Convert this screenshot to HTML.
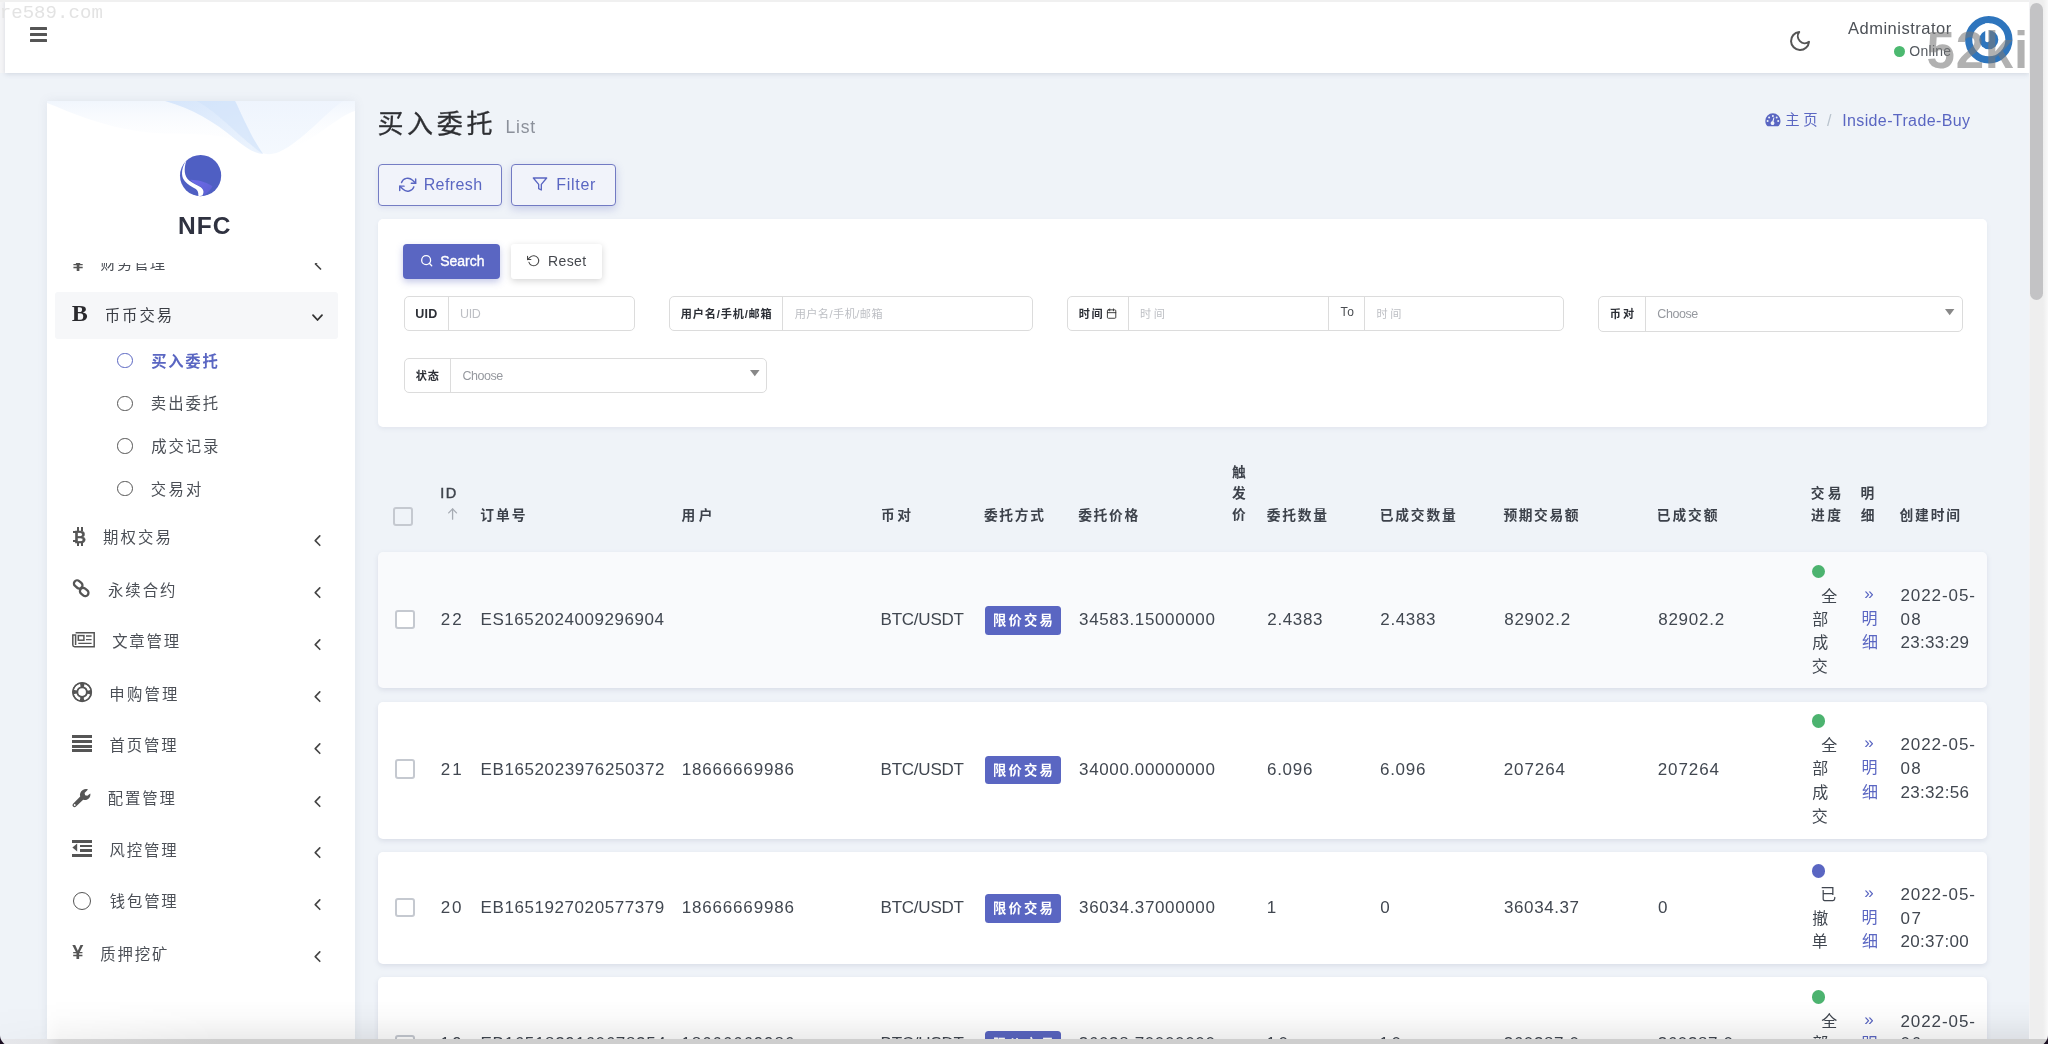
<!DOCTYPE html>
<html lang="zh-CN"><head><meta charset="utf-8"><title>买入委托</title>
<style>
html,body{margin:0;padding:0}
body{width:2048px;height:1044px;overflow:hidden;position:relative;background:#eff3f8;font-family:"Liberation Sans","Noto Sans CJK SC",sans-serif;color:#414750}
.t{position:absolute;white-space:nowrap;display:block}
.b{font-weight:700}
.serif{font-family:"Liberation Serif","Noto Serif CJK SC",serif}
.mono{font-family:"Liberation Mono","Noto Sans CJK SC",monospace}
svg{position:absolute;overflow:visible}
.st{fill:none;stroke-linecap:round;stroke-linejoin:round}
.ig{position:absolute;box-sizing:border-box;border:1px solid #dcdcdc;border-radius:5px}
.dv{position:absolute;width:1px;background:#dcdcdc}
.row{position:absolute;left:378px;width:1609px;background:#fff;border-radius:5px;box-shadow:0 2px 5px rgba(120,130,160,.18)}
.cb{position:absolute;box-sizing:border-box;width:19.5px;height:19.5px;border:2px solid #c5c9d0;border-radius:3px;background:#fff}
.badge{position:absolute;background:#5a66c2;border-radius:3.5px}
.dot{position:absolute;width:13.4px;height:13.4px;border-radius:50%}
</style></head><body><div id="app" style="position:absolute;left:0;top:0;width:2048px;height:1044px;overflow:hidden;opacity:.9999">
<div style="position:absolute;left:0px;top:0px;width:5px;height:73px;background:#f6f6f7"></div><div style="position:absolute;left:4.5px;top:0px;width:2024.5px;height:72.5px;background:#fff;box-shadow:0 1px 5px rgba(90,100,130,.2)"></div><div style="position:absolute;left:0px;top:0px;width:2048px;height:1.5px;background:#f0f0f0"></div><div style="position:absolute;left:29.5px;top:27px;width:17.5px;height:2.6px;background:#555;border-radius:.5px"></div><div style="position:absolute;left:29.5px;top:33px;width:17.5px;height:2.6px;background:#555;border-radius:.5px"></div><div style="position:absolute;left:29.5px;top:39px;width:17.5px;height:2.6px;background:#555;border-radius:.5px"></div><span class="t mono" style="left:-0.33px;top:0.00px;font-size:19px;line-height:26px;color:#e3e3e3;letter-spacing:0.075px;">re589.com</span><svg style="left:1788px;top:29px" width="24" height="24" viewBox="0 0 24 24" ><g class="st" stroke="#555" stroke-width="2"><path d="M21 12.79A9 9 0 1 1 11.21 3 7 7 0 0 0 21 12.79z"/></g></svg><span class="t" style="left:1848.00px;top:16.00px;font-size:16.5px;line-height:24px;color:#4d5157;letter-spacing:0.500px;">Administrator</span><div style="position:absolute;left:1894px;top:45.7px;width:11.4px;height:11.4px;background:#4cb970;border-radius:50%"></div><span class="t" style="left:1909.33px;top:41.00px;font-size:14px;line-height:20px;color:#555a60;letter-spacing:0.270px;">Online</span><svg style="left:1965px;top:16px" width="47.6" height="47.6" viewBox="0 0 48 48" ><circle cx="24" cy="24" r="20.3" fill="#fff" stroke="#2e75bd" stroke-width="7.2"/><circle cx="24" cy="24" r="9.6" fill="#2e75bd"/><path d="M20.4 7.4 L20.4 24.4 A2.05 2.05 0 0 0 24.5 24.4 L24.5 7.4 Z" fill="#fff"/></svg><span class="t " style="left:1926.50px;top:21.00px;font-size:51px;line-height:60px;color:rgba(120,120,120,.58);font-weight:700;letter-spacing:.77px;">52ki</span><div style="position:absolute;left:2029px;top:0px;width:19px;height:1044px;background:linear-gradient(to right,#f4f4f6 0,#eeeeee 1.5px,#eeeeee 14px,#f9f9f9 100%)"></div><div style="position:absolute;left:2029.5px;top:2.5px;width:13.5px;height:297px;background:#c3c3c5;border-radius:7px"></div><div style="position:absolute;left:46.5px;top:101px;width:308px;height:943px;background:#fff;box-shadow:0 0 10px rgba(100,110,140,.10)"></div><svg style="left:46.5px;top:101px" width="308" height="80" viewBox="0 0 308 80" ><defs><linearGradient id="wg1" x1="0" y1="0" x2="1" y2="1"><stop offset="0" stop-color="#d3e4fb" stop-opacity=".9"/><stop offset="1" stop-color="#e6f0fd" stop-opacity=".75"/></linearGradient><linearGradient id="wg2" x1="0" y1="0" x2="0" y2="1"><stop offset="0" stop-color="#f1f6fd"/><stop offset="1" stop-color="#ffffff" stop-opacity="0"/></linearGradient><linearGradient id="wg3" x1="0" y1="0" x2="0" y2="1"><stop offset="0" stop-color="#eef4fd" stop-opacity=".9"/><stop offset="1" stop-color="#f3f8fe" stop-opacity=".9"/></linearGradient></defs><path d="M0 0 H308 V10 C292 14 270 38 240 50 C226 55 214 52 200 44 C170 28 130 36 90 30 C55 25 25 12 0 2 Z" fill="url(#wg2)"/><path d="M186 0 H296 C278 12 256 40 232 51 C222 55 214 53 206 48 C200 30 194 14 186 0 Z" fill="url(#wg3)"/><path d="M118 0 H188 C196 16 204 36 216 53 C206 52 198 46 188 38 C166 20 146 8 118 0 Z" fill="url(#wg1)"/><path d="M150 0 H188 C196 16 204 36 216 53 C192 36 172 12 150 0 Z" fill="#cfe1fa" opacity=".55"/></svg><svg style="left:179.8px;top:154.9px" width="41.2" height="41.2" viewBox="0 0 41.2 41.2" ><defs><linearGradient id="lg1" x1="0" y1="0" x2="1" y2="1"><stop offset="0" stop-color="#6f6bea"/><stop offset="1" stop-color="#5b5fd0"/></linearGradient></defs><circle cx="20.6" cy="20.6" r="20.6" fill="#4f5fc3"/><path d="M10.4 24.7 C14 25 17.5 25.2 20.5 26 C24.5 27 28.5 28.8 32.5 31.2 C31 34.5 28 37.6 23.2 40.6 C25 36.5 23.5 33.2 20 31.2 C16.5 29.4 12.5 27.6 10.4 24.7 Z" fill="url(#lg1)"/><path d="M5.9 5.9 C3.3 9.6 1.9 14.4 2.0 18.7 C2.2 22.2 3.4 24.4 4.9 26.2 C7.6 29.2 11.6 31.8 15.8 34.1 C17.8 35.4 18.6 37.6 18.3 40.7 C19.8 41.1 21.2 41 22.4 40.6 C24.2 37.6 24 34.8 20.8 32.3 C17.5 30 13 28.4 9.1 25.4 C6.6 23.3 5.2 20.6 4.8 17 C4.5 13.2 5 9.4 6.3 5.9 Z" fill="#fff"/></svg><span class="t" style="left:178.00px;top:209.00px;font-size:24.5px;line-height:34px;color:#2f3240;font-weight:700;letter-spacing:1.020px;">NFC</span><div style="position:absolute;left:47px;top:263.2px;width:307px;height:20px;overflow:hidden"><div style="position:absolute;left:-47px;top:-263.2px;width:400px;height:400px"><span class="t " style="left:100.50px;top:252.00px;font-size:15.35px;line-height:24px;color:#4b4f56;letter-spacing:1.1px;">财务管理</span><span class="t " style="left:72.50px;top:250.00px;font-size:20px;line-height:28px;color:#555;font-weight:700;">¥</span><svg style="left:313.5px;top:258.2px" width="8" height="12" viewBox="0 0 8 12" ><polyline class="st" points="6.5 1 1.5 6 6.5 11" stroke="#444" stroke-width="1.7"/></svg></div></div><div style="position:absolute;left:55px;top:291.5px;width:282.5px;height:47px;background:#f6f7f9;border-radius:3px"></div><span class="t serif" style="left:71.67px;top:299.00px;font-size:24px;line-height:28px;color:#2a2a2e;font-weight:700;">B</span><span class="t" style="left:104.67px;top:304.00px;font-size:15.35px;line-height:24px;color:#3a3d44;letter-spacing:2.030px;">币币交易</span><svg style="left:312px;top:313.5px" width="11" height="7.5" viewBox="0 0 11 7.5" ><polyline class="st" points="1 1.2 5.5 6 10 1.2" stroke="#333" stroke-width="1.8"/></svg><div style="position:absolute;left:117.2px;top:352.9px;width:15.4px;height:15.4px;box-sizing:border-box;border:1.9px solid #5a66c2;border-radius:50%"></div><span class="t" style="left:151.20px;top:350.00px;font-size:15.35px;line-height:24px;color:#5a66c2;font-weight:700;letter-spacing:1.740px;">买入委托</span><div style="position:absolute;left:117.2px;top:395.6px;width:15.4px;height:15.4px;box-sizing:border-box;border:1.9px solid #555;border-radius:50%"></div><span class="t" style="left:150.87px;top:392.00px;font-size:15.35px;line-height:24px;color:#4b4f56;letter-spacing:1.940px;">卖出委托</span><div style="position:absolute;left:117.2px;top:438.2px;width:15.4px;height:15.4px;box-sizing:border-box;border:1.9px solid #555;border-radius:50%"></div><span class="t" style="left:151.20px;top:435.00px;font-size:15.35px;line-height:24px;color:#4b4f56;letter-spacing:1.940px;">成交记录</span><div style="position:absolute;left:117.2px;top:480.9px;width:15.4px;height:15.4px;box-sizing:border-box;border:1.9px solid #555;border-radius:50%"></div><span class="t" style="left:150.87px;top:478.00px;font-size:15.35px;line-height:24px;color:#4b4f56;letter-spacing:2.250px;">交易对</span><span class="t" style="left:103.00px;top:526.00px;font-size:15.35px;line-height:24px;color:#4b4f56;letter-spacing:2.120px;">期权交易</span><svg style="left:314.4px;top:534.6px" width="7" height="11.2" viewBox="0 0 7 11.2" ><polyline class="st" points="5.8 0.9 1.2 5.6 5.8 10.3" stroke="#444" stroke-width="1.6"/></svg><span class="t" style="left:108.00px;top:579.00px;font-size:15.35px;line-height:24px;color:#4b4f56;letter-spacing:2.020px;">永续合约</span><svg style="left:314.4px;top:587.4px" width="7" height="11.2" viewBox="0 0 7 11.2" ><polyline class="st" points="5.8 0.9 1.2 5.6 5.8 10.3" stroke="#444" stroke-width="1.6"/></svg><span class="t" style="left:112.20px;top:630.00px;font-size:15.35px;line-height:24px;color:#4b4f56;letter-spacing:1.820px;">文章管理</span><svg style="left:314.4px;top:639.1px" width="7" height="11.2" viewBox="0 0 7 11.2" ><polyline class="st" points="5.8 0.9 1.2 5.6 5.8 10.3" stroke="#444" stroke-width="1.6"/></svg><span class="t" style="left:109.33px;top:683.00px;font-size:15.35px;line-height:24px;color:#4b4f56;letter-spacing:2.220px;">申购管理</span><svg style="left:314.4px;top:691.4px" width="7" height="11.2" viewBox="0 0 7 11.2" ><polyline class="st" points="5.8 0.9 1.2 5.6 5.8 10.3" stroke="#444" stroke-width="1.6"/></svg><span class="t" style="left:109.53px;top:734.00px;font-size:15.35px;line-height:24px;color:#4b4f56;letter-spacing:1.920px;">首页管理</span><svg style="left:314.4px;top:742.9px" width="7" height="11.2" viewBox="0 0 7 11.2" ><polyline class="st" points="5.8 0.9 1.2 5.6 5.8 10.3" stroke="#444" stroke-width="1.6"/></svg><span class="t" style="left:107.67px;top:787.00px;font-size:15.35px;line-height:24px;color:#4b4f56;letter-spacing:1.920px;">配置管理</span><svg style="left:314.4px;top:795.6px" width="7" height="11.2" viewBox="0 0 7 11.2" ><polyline class="st" points="5.8 0.9 1.2 5.6 5.8 10.3" stroke="#444" stroke-width="1.6"/></svg><span class="t" style="left:109.53px;top:839.00px;font-size:15.35px;line-height:24px;color:#4b4f56;letter-spacing:1.920px;">风控管理</span><svg style="left:314.4px;top:847.4px" width="7" height="11.2" viewBox="0 0 7 11.2" ><polyline class="st" points="5.8 0.9 1.2 5.6 5.8 10.3" stroke="#444" stroke-width="1.6"/></svg><span class="t" style="left:109.87px;top:890.00px;font-size:15.35px;line-height:24px;color:#4b4f56;letter-spacing:1.820px;">钱包管理</span><svg style="left:314.4px;top:899.1px" width="7" height="11.2" viewBox="0 0 7 11.2" ><polyline class="st" points="5.8 0.9 1.2 5.6 5.8 10.3" stroke="#444" stroke-width="1.6"/></svg><span class="t" style="left:100.33px;top:943.00px;font-size:15.35px;line-height:24px;color:#4b4f56;letter-spacing:1.920px;">质押挖矿</span><svg style="left:314.4px;top:951.4px" width="7" height="11.2" viewBox="0 0 7 11.2" ><polyline class="st" points="5.8 0.9 1.2 5.6 5.8 10.3" stroke="#444" stroke-width="1.6"/></svg><span class="t" style="left:74.13px;top:527.00px;font-size:16.2px;line-height:20px;color:#555;font-weight:700;-webkit-text-stroke:.4px #555;">B</span><div style="position:absolute;left:72.8px;top:531px;width:3.7px;height:2.2px;background:#555"></div><div style="position:absolute;left:72.8px;top:540.3px;width:3.7px;height:2.2px;background:#555"></div><div style="position:absolute;left:77.4px;top:527.3px;width:1.9px;height:4.1px;background:#555"></div><div style="position:absolute;left:77.4px;top:542.2px;width:1.9px;height:3.6px;background:#555"></div><div style="position:absolute;left:81.3px;top:527.3px;width:1.9px;height:4.1px;background:#555"></div><div style="position:absolute;left:81.3px;top:542.2px;width:1.9px;height:3.6px;background:#555"></div><svg style="left:72.4px;top:578.5px" width="18.4" height="18.4" viewBox="0 0 18.4 18.4" ><g fill="none" stroke="#555" stroke-width="2.3"><rect x="1.6" y="2.2" width="9.2" height="6.4" rx="3.2" transform="rotate(40 6.2 5.4)"/><rect x="7.6" y="9.8" width="9.2" height="6.4" rx="3.2" transform="rotate(40 12.2 13)"/></g></svg><svg style="left:72px;top:632px" width="23" height="15.6" viewBox="0 0 23 15.6" ><g fill="none" stroke="#555" stroke-width="1.5"><path d="M3.6 0.8 H22.2 V14.8 H2.6 A1.9 1.9 0 0 1 0.8 13 V3 H3.6 V13"/><rect x="6.3" y="3.6" width="5.6" height="4.6"/><path d="M14 4 H19.6 M14 7.6 H19.6 M6.3 11.4 H19.6" stroke-width="1.3"/></g></svg><svg style="left:72px;top:682.3px" width="20.2" height="20.2" viewBox="0 0 20.2 20.2" ><circle cx="10.1" cy="10.1" r="7.2" fill="none" stroke="#555" stroke-width="5.4"/><circle cx="10.1" cy="10.1" r="7.2" fill="none" stroke="#fff" stroke-width="2.6" stroke-dasharray="7.3 4" stroke-dashoffset="-2"/><circle cx="10.1" cy="10.1" r="9.3" fill="none" stroke="#555" stroke-width="1.5"/><circle cx="10.1" cy="10.1" r="4.6" fill="none" stroke="#555" stroke-width="1.5"/></svg><div style="position:absolute;left:72px;top:735.4px;width:20.3px;height:2.9px;background:#555"></div><div style="position:absolute;left:72px;top:740.05px;width:20.3px;height:2.9px;background:#555"></div><div style="position:absolute;left:72px;top:744.7px;width:20.3px;height:2.9px;background:#555"></div><div style="position:absolute;left:72px;top:749.35px;width:20.3px;height:2.9px;background:#555"></div><svg style="left:72.4px;top:788.7px" width="18.6" height="18.2" viewBox="0 0 18.6 18.2" ><path d="M18.3 4.6 C18.9 7.4 17.2 10.4 14.2 11 C13.1 11.2 12.1 11.1 11.2 10.7 L4 17.6 C3.2 18.4 1.9 18.4 1.1 17.6 C0.3 16.8 0.3 15.5 1.1 14.7 L8.2 7.6 C7.4 5.2 8.4 2.3 10.8 0.9 C12.5 -0.1 14.4 -0.2 16 0.5 L12.6 3.9 L13.1 6.2 L15.3 6.7 Z" fill="#555"/><circle cx="2.7" cy="16" r="0.9" fill="#fff"/></svg><div style="position:absolute;left:72px;top:840.2px;width:20.3px;height:2.7px;background:#555"></div><div style="position:absolute;left:80.2px;top:844.75px;width:12.1px;height:2.7px;background:#555"></div><div style="position:absolute;left:80.2px;top:849.3px;width:12.1px;height:2.7px;background:#555"></div><div style="position:absolute;left:72px;top:853.85px;width:20.3px;height:2.7px;background:#555"></div><svg style="left:72px;top:843.4px" width="5.6" height="9" viewBox="0 0 5.6 9" ><path d="M5.2 0.4 V8.6 L0.4 4.5 Z" fill="#555"/></svg><div style="position:absolute;left:73px;top:891.5px;width:18px;height:18px;box-sizing:border-box;border:1.9px solid #555;border-radius:50%"></div><span class="t" style="left:72.13px;top:940.00px;font-size:20px;line-height:24px;color:#555;font-weight:700;">¥</span><span class="t" style="left:377.43px;top:106.00px;font-size:26.04px;line-height:36px;color:#2e2f33;letter-spacing:3.650px;-webkit-text-stroke:.3px #2e2f33;">买入委托</span><span class="t" style="left:505.47px;top:115.00px;font-size:17.5px;line-height:24px;color:#8b909a;letter-spacing:0.770px;">List</span><svg style="left:1764.8px;top:112.6px" width="15.8" height="13.6" viewBox="0 0 15.8 13.6" ><path d="M7.9 0.3 A7.6 7.6 0 0 0 0.3 7.9 C0.3 9.6 0.85 11.2 1.8 12.5 C2 12.9 2.4 13.2 2.9 13.2 H12.9 C13.4 13.2 13.8 12.9 14 12.5 C14.95 11.2 15.5 9.6 15.5 7.9 A7.6 7.6 0 0 0 7.9 0.3 Z" fill="#5a66c2"/><g fill="#eff3f8"><circle cx="7.9" cy="2.9" r="1"/><circle cx="4.1" cy="4.4" r="1"/><circle cx="11.7" cy="4.4" r="1"/><circle cx="2.6" cy="8.1" r="1"/><circle cx="13.2" cy="8.1" r="1"/><path d="M8.5 4.4 L9.4 4.6 L8.6 8.6 A1.9 1.9 0 1 1 7.3 8.3 Z"/></g></svg><span class="t" style="left:1785.33px;top:109.00px;font-size:14.32px;line-height:22px;color:#5a66c2;letter-spacing:3.690px;">主页</span><span class="t" style="left:1827.00px;top:110.00px;font-size:16px;line-height:22px;color:#b9c3cd;">/</span><span class="t" style="left:1842.20px;top:110.00px;font-size:16px;line-height:22px;color:#5a66c2;letter-spacing:0.376px;">Inside-Trade-Buy</span><div style="position:absolute;left:378px;top:164.2px;width:124px;height:42.2px;box-sizing:border-box;border:1.5px solid #757dc4;border-radius:4px;background:#f1f3fa;box-shadow:0 2px 5px rgba(88,100,189,.12)"></div><svg style="left:398.6px;top:176px" width="17.4" height="17.4" viewBox="0 0 24 24" ><g class="st" stroke="#5a66c2" stroke-width="2"><polyline points="23 4 23 10 17 10"/><polyline points="1 20 1 14 7 14"/><path d="M3.51 9a9 9 0 0 1 14.85-3.36L23 10M1 14l4.64 4.36A9 9 0 0 0 20.49 15"/></g></svg><span class="t" style="left:423.67px;top:174.00px;font-size:16px;line-height:22px;color:#5a66c2;letter-spacing:0.400px;">Refresh</span><div style="position:absolute;left:511px;top:164.2px;width:104.8px;height:42.2px;box-sizing:border-box;border:1.5px solid #727ac3;border-radius:4px;background:#f1f3fa;box-shadow:0 3px 8px rgba(88,100,189,.28)"></div><svg style="left:532px;top:176.4px" width="16" height="16" viewBox="0 0 24 24" ><g class="st" stroke="#5a66c2" stroke-width="2"><polygon points="22 3 2 3 10 12.46 10 19 14 21 14 12.46 22 3"/></g></svg><span class="t" style="left:556.33px;top:174.00px;font-size:16px;line-height:22px;color:#5a66c2;letter-spacing:0.690px;">Filter</span><div style="position:absolute;left:378px;top:218.6px;width:1609px;height:208.4px;background:#fff;border-radius:5px;box-shadow:0 2px 4px rgba(120,130,160,.10)"></div><div style="position:absolute;left:403px;top:244px;width:97px;height:34.6px;background:#5a66c2;border-radius:4px;box-shadow:0 3px 7px rgba(88,100,189,.35)"></div><svg style="left:419.5px;top:254.3px" width="13.4" height="13.4" viewBox="0 0 24 24" ><g class="st" stroke="#fff" stroke-width="2.3"><circle cx="11" cy="11" r="8"/><line x1="21" y1="21" x2="16.65" y2="16.65"/></g></svg><span class="t" style="left:440.33px;top:251.00px;font-size:14px;line-height:20px;color:#fff;letter-spacing:-0.042px;-webkit-text-stroke:.35px #fff;">Search</span><div style="position:absolute;left:511px;top:244px;width:91px;height:34.6px;background:#fff;border-radius:3px;box-shadow:0 2px 7px rgba(0,0,0,.17)"></div><svg style="left:527px;top:254.4px" width="13.4" height="13.4" viewBox="0 0 24 24" ><g class="st" stroke="#444" stroke-width="1.9"><polyline points="1 4 1 10 7 10"/><path d="M3.51 15a9 9 0 1 0 2.13-9.36L1 10"/></g></svg><span class="t" style="left:548.00px;top:251.00px;font-size:14px;line-height:20px;color:#45484e;letter-spacing:0.375px;">Reset</span><div class="ig" style="left:403.5px;top:296.3px;width:231.2px;height:34.6px"></div><div class="dv" style="left:448px;top:296.8px;height:33.6px"></div><span class="t" style="left:415.33px;top:305.00px;font-size:12.5px;line-height:18px;color:#2c2f36;font-weight:700;letter-spacing:0.195px;">UID</span><span class="t" style="left:460.00px;top:305.00px;font-size:12.5px;line-height:18px;color:#bdbfc4;letter-spacing:-0.330px;">UID</span><div class="ig" style="left:669.4px;top:296.3px;width:363.3px;height:34.6px"></div><div class="dv" style="left:782.2px;top:296.8px;height:33.6px"></div><span class="t" style="left:680.67px;top:306.00px;font-size:11.16px;line-height:16px;color:#2c2f36;font-weight:700;letter-spacing:0.851px;">用户名/手机/邮箱</span><span class="t" style="left:794.67px;top:306.00px;font-size:11.16px;line-height:16px;color:#bdbfc4;letter-spacing:0.450px;">用户名/手机/邮箱</span><div class="ig" style="left:1067.4px;top:296.3px;width:496.3px;height:34.6px"></div><div class="dv" style="left:1127.9px;top:296.8px;height:33.6px"></div><div class="dv" style="left:1327.5px;top:296.8px;height:33.6px"></div><div class="dv" style="left:1363.8px;top:296.8px;height:33.6px"></div><span class="t" style="left:1078.67px;top:306.00px;font-size:11.16px;line-height:16px;color:#2c2f36;font-weight:700;letter-spacing:1.650px;">时间</span><svg style="left:1106.4px;top:307.6px" width="11.2" height="11.2" viewBox="0 0 24 24" ><g class="st" stroke="#333" stroke-width="2"><rect x="3" y="4" width="18" height="18" rx="2" ry="2"/><line x1="16" y1="2" x2="16" y2="6"/><line x1="8" y1="2" x2="8" y2="6"/><line x1="3" y1="10" x2="21" y2="10"/></g></svg><span class="t" style="left:1140.00px;top:306.00px;font-size:11.16px;line-height:16px;color:#bdbfc4;letter-spacing:2.700px;">时间</span><span class="t" style="left:1340.47px;top:304.00px;font-size:12px;line-height:16px;color:#4a4d52;letter-spacing:0.690px;">To</span><span class="t" style="left:1376.60px;top:306.00px;font-size:11.16px;line-height:16px;color:#bdbfc4;letter-spacing:2.400px;">时间</span><div class="ig" style="left:1598px;top:296.3px;width:364.6px;height:35.4px"></div><div class="dv" style="left:1644.5px;top:296.8px;height:34.4px"></div><span class="t" style="left:1609.67px;top:306.00px;font-size:11.16px;line-height:16px;color:#2c2f36;font-weight:700;letter-spacing:2.250px;">币对</span><span class="t" style="left:1657.33px;top:305.00px;font-size:12.5px;line-height:18px;color:#96999f;letter-spacing:-0.450px;">Choose</span><svg style="left:1944.8px;top:308.8px" width="9.4" height="6.2" viewBox="0 0 9.4 6.2" ><path d="M0 0 H9.4 L4.7 6.2 Z" fill="#888"/></svg><div class="ig" style="left:403.5px;top:358px;width:363.9px;height:35.4px"></div><div class="dv" style="left:450px;top:358.5px;height:34.4px"></div><span class="t" style="left:415.67px;top:368.00px;font-size:11.16px;line-height:16px;color:#2c2f36;font-weight:700;letter-spacing:1.020px;">状态</span><span class="t" style="left:462.53px;top:367.00px;font-size:12.5px;line-height:18px;color:#96999f;letter-spacing:-0.498px;">Choose</span><svg style="left:750px;top:370px" width="9.6" height="6.2" viewBox="0 0 9.6 6.2" ><path d="M0 0 H9.6 L4.8 6.2 Z" fill="#888"/></svg><div class="cb" style="left:393.3px;top:506.8px;background:transparent"></div><span class="t" style="left:440.27px;top:483.00px;font-size:14.5px;line-height:20px;color:#3d424b;letter-spacing:1.470px;-webkit-text-stroke:.45px #3d424b;">ID</span><svg style="left:448px;top:508.4px" width="9.2" height="11.8" viewBox="0 0 9.2 11.8" ><g class="st" stroke="#a6abb3" stroke-width="1.3"><line x1="4.6" y1="1" x2="4.6" y2="11.2"/><polyline points="0.7 4.9 4.6 0.9 8.5 4.9"/></g></svg><span class="t" style="left:480.13px;top:506.00px;font-size:13.76px;line-height:20px;color:#3d424b;font-weight:700;letter-spacing:2.085px;">订单号</span><span class="t" style="left:681.47px;top:506.00px;font-size:13.76px;line-height:20px;color:#3d424b;font-weight:700;letter-spacing:3.600px;">用户</span><span class="t" style="left:880.93px;top:506.00px;font-size:13.76px;line-height:20px;color:#3d424b;font-weight:700;letter-spacing:2.700px;">币对</span><span class="t" style="left:983.93px;top:506.00px;font-size:13.76px;line-height:20px;color:#3d424b;font-weight:700;letter-spacing:1.680px;">委托方式</span><span class="t" style="left:1078.20px;top:506.00px;font-size:13.76px;line-height:20px;color:#3d424b;font-weight:700;letter-spacing:1.680px;">委托价格</span><div><span class="t" style="left:1232.00px;top:463.00px;font-size:13.76px;line-height:20px;color:#3d424b;font-weight:700;">触</span><span class="t" style="left:1232.00px;top:484.00px;font-size:13.76px;line-height:20px;color:#3d424b;font-weight:700;">发</span><span class="t" style="left:1232.00px;top:505.00px;font-size:13.76px;line-height:20px;color:#3d424b;font-weight:700;">价</span></div><span class="t" style="left:1266.87px;top:506.00px;font-size:13.76px;line-height:20px;color:#3d424b;font-weight:700;letter-spacing:1.680px;">委托数量</span><span class="t" style="left:1379.67px;top:506.00px;font-size:13.76px;line-height:20px;color:#3d424b;font-weight:700;letter-spacing:1.853px;">已成交数量</span><span class="t" style="left:1503.53px;top:506.00px;font-size:13.76px;line-height:20px;color:#3d424b;font-weight:700;letter-spacing:1.553px;">预期交易额</span><span class="t" style="left:1656.67px;top:506.00px;font-size:13.76px;line-height:20px;color:#3d424b;font-weight:700;letter-spacing:1.980px;">已成交额</span><div><span class="t" style="left:1810.67px;top:484.00px;font-size:13.76px;line-height:20px;color:#3d424b;font-weight:700;letter-spacing:3.300px;">交易</span><span class="t" style="left:1811.00px;top:506.00px;font-size:13.76px;line-height:20px;color:#3d424b;font-weight:700;letter-spacing:2.400px;">进度</span></div><div><span class="t" style="left:1860.60px;top:484.00px;font-size:13.76px;line-height:20px;color:#3d424b;font-weight:700;">明</span><span class="t" style="left:1860.77px;top:506.00px;font-size:13.76px;line-height:20px;color:#3d424b;font-weight:700;">细</span></div><span class="t" style="left:1899.60px;top:506.00px;font-size:13.76px;line-height:20px;color:#3d424b;font-weight:700;letter-spacing:1.780px;">创建时间</span><div class="row" style="top:551.5px;height:136px;background:#f9fafc;"></div><div class="cb" style="left:395px;top:609.5px"></div><span class="t" style="left:440.87px;top:608.00px;font-size:17px;line-height:24px;color:#414750;letter-spacing:2.040px;">22</span><span class="t" style="left:480.57px;top:608.00px;font-size:17px;line-height:24px;color:#414750;letter-spacing:0.556px;">ES1652024009296904</span><span class="t" style="left:880.60px;top:608.00px;font-size:17px;line-height:24px;color:#414750;letter-spacing:-0.240px;">BTC/USDT</span><div class="badge" style="left:985.3px;top:606.4px;width:75.4px;height:28.3px"></div><span class="t" style="left:992.93px;top:611.00px;font-size:13.3px;line-height:20px;color:#fff;font-weight:700;letter-spacing:2.220px;">限价交易</span><span class="t" style="left:1079.07px;top:608.00px;font-size:17px;line-height:24px;color:#414750;letter-spacing:0.632px;">34583.15000000</span><span class="t" style="left:1267.33px;top:608.00px;font-size:17px;line-height:24px;color:#414750;letter-spacing:0.618px;">2.4383</span><span class="t" style="left:1380.33px;top:608.00px;font-size:17px;line-height:24px;color:#414750;letter-spacing:0.618px;">2.4383</span><span class="t" style="left:1504.23px;top:608.00px;font-size:17px;line-height:24px;color:#414750;letter-spacing:0.740px;">82902.2</span><span class="t" style="left:1658.23px;top:608.00px;font-size:17px;line-height:24px;color:#414750;letter-spacing:0.740px;">82902.2</span><div class="dot" style="left:1811.8px;top:565.1px;background:#4cb36f"></div><div><span class="t" style="left:1821.20px;top:586.00px;font-size:16px;line-height:22px;color:#414750;">全</span><span class="t" style="left:1812.37px;top:609.00px;font-size:16px;line-height:22px;color:#414750;">部</span><span class="t" style="left:1812.20px;top:632.00px;font-size:16px;line-height:22px;color:#414750;">成</span><span class="t" style="left:1811.87px;top:656.00px;font-size:16px;line-height:22px;color:#414750;">交</span></div><div><span class="t" style="left:1864.33px;top:582.00px;font-size:17px;line-height:24px;color:#5a66c2;">»</span> <span class="t" style="left:1861.40px;top:608.00px;font-size:16px;line-height:22px;color:#5a66c2;">明</span><span class="t" style="left:1862.07px;top:632.00px;font-size:16px;line-height:22px;color:#5a66c2;">细</span></div><div><span class="t" style="left:1900.40px;top:584.00px;font-size:17px;line-height:24px;color:#414750;letter-spacing:0.934px;">2022-05-</span><span class="t" style="left:1900.40px;top:608.00px;font-size:17px;line-height:24px;color:#414750;letter-spacing:1.470px;">08</span> <span class="t" style="left:1900.40px;top:631.00px;font-size:17px;line-height:24px;color:#414750;letter-spacing:0.343px;">23:33:29</span></div><div class="row" style="top:701.5px;height:137px;"></div><div class="cb" style="left:395px;top:759px"></div><span class="t" style="left:440.87px;top:758.00px;font-size:17px;line-height:24px;color:#414750;letter-spacing:2.040px;">21</span><span class="t" style="left:480.57px;top:758.00px;font-size:17px;line-height:24px;color:#414750;letter-spacing:0.591px;">EB1652023976250372</span><span class="t" style="left:681.67px;top:758.00px;font-size:17px;line-height:24px;color:#414750;letter-spacing:0.831px;">18666669986</span><span class="t" style="left:880.60px;top:758.00px;font-size:17px;line-height:24px;color:#414750;letter-spacing:-0.240px;">BTC/USDT</span><div class="badge" style="left:985.3px;top:755.9px;width:75.4px;height:28.3px"></div><span class="t" style="left:992.93px;top:761.00px;font-size:13.3px;line-height:20px;color:#fff;font-weight:700;letter-spacing:2.220px;">限价交易</span><span class="t" style="left:1079.07px;top:758.00px;font-size:17px;line-height:24px;color:#414750;letter-spacing:0.632px;">34000.00000000</span><span class="t" style="left:1267.00px;top:758.00px;font-size:17px;line-height:24px;color:#414750;letter-spacing:0.713px;">6.096</span><span class="t" style="left:1380.00px;top:758.00px;font-size:17px;line-height:24px;color:#414750;letter-spacing:0.713px;">6.096</span><span class="t" style="left:1503.73px;top:758.00px;font-size:17px;line-height:24px;color:#414750;letter-spacing:0.900px;">207264</span><span class="t" style="left:1657.73px;top:758.00px;font-size:17px;line-height:24px;color:#414750;letter-spacing:0.900px;">207264</span><div class="dot" style="left:1811.8px;top:714.3px;background:#4cb36f"></div><div><span class="t" style="left:1821.20px;top:735.00px;font-size:16px;line-height:22px;color:#414750;">全</span><span class="t" style="left:1812.37px;top:758.00px;font-size:16px;line-height:22px;color:#414750;">部</span><span class="t" style="left:1812.20px;top:782.00px;font-size:16px;line-height:22px;color:#414750;">成</span><span class="t" style="left:1811.87px;top:806.00px;font-size:16px;line-height:22px;color:#414750;">交</span></div><div><span class="t" style="left:1864.33px;top:731.00px;font-size:17px;line-height:24px;color:#5a66c2;">»</span> <span class="t" style="left:1861.40px;top:757.00px;font-size:16px;line-height:22px;color:#5a66c2;">明</span><span class="t" style="left:1862.07px;top:782.00px;font-size:16px;line-height:22px;color:#5a66c2;">细</span></div><div><span class="t" style="left:1900.40px;top:733.00px;font-size:17px;line-height:24px;color:#414750;letter-spacing:0.934px;">2022-05-</span><span class="t" style="left:1900.40px;top:757.00px;font-size:17px;line-height:24px;color:#414750;letter-spacing:1.470px;">08</span> <span class="t" style="left:1900.40px;top:781.00px;font-size:17px;line-height:24px;color:#414750;letter-spacing:0.343px;">23:32:56</span></div><div class="row" style="top:852px;height:112px;"></div><div class="cb" style="left:395px;top:897.5px"></div><span class="t" style="left:440.87px;top:896.00px;font-size:17px;line-height:24px;color:#414750;letter-spacing:1.740px;">20</span><span class="t" style="left:480.57px;top:896.00px;font-size:17px;line-height:24px;color:#414750;letter-spacing:0.574px;">EB1651927020577379</span><span class="t" style="left:681.67px;top:896.00px;font-size:17px;line-height:24px;color:#414750;letter-spacing:0.831px;">18666669986</span><span class="t" style="left:880.60px;top:896.00px;font-size:17px;line-height:24px;color:#414750;letter-spacing:-0.240px;">BTC/USDT</span><div class="badge" style="left:985.3px;top:894.4px;width:75.4px;height:28.3px"></div><span class="t" style="left:992.93px;top:899.00px;font-size:13.3px;line-height:20px;color:#fff;font-weight:700;letter-spacing:2.220px;">限价交易</span><span class="t" style="left:1079.07px;top:896.00px;font-size:17px;line-height:24px;color:#414750;letter-spacing:0.632px;">36034.37000000</span><span class="t" style="left:1266.67px;top:896.00px;font-size:17px;line-height:24px;color:#414750;">1</span><span class="t" style="left:1380.33px;top:896.00px;font-size:17px;line-height:24px;color:#414750;">0</span><span class="t" style="left:1504.07px;top:896.00px;font-size:17px;line-height:24px;color:#414750;letter-spacing:0.574px;">36034.37</span><span class="t" style="left:1658.07px;top:896.00px;font-size:17px;line-height:24px;color:#414750;">0</span><div class="dot" style="left:1811.8px;top:864.2px;background:#5a66c2"></div><div><span class="t" style="left:1820.20px;top:884.00px;font-size:16px;line-height:22px;color:#414750;">已</span><span class="t" style="left:1812.20px;top:908.00px;font-size:16px;line-height:22px;color:#414750;">撤</span><span class="t" style="left:1811.87px;top:931.00px;font-size:16px;line-height:22px;color:#414750;">单</span></div><div><span class="t" style="left:1864.33px;top:881.00px;font-size:17px;line-height:24px;color:#5a66c2;">»</span> <span class="t" style="left:1861.40px;top:907.00px;font-size:16px;line-height:22px;color:#5a66c2;">明</span><span class="t" style="left:1862.07px;top:931.00px;font-size:16px;line-height:22px;color:#5a66c2;">细</span></div><div><span class="t" style="left:1900.40px;top:883.00px;font-size:17px;line-height:24px;color:#414750;letter-spacing:0.934px;">2022-05-</span><span class="t" style="left:1900.40px;top:907.00px;font-size:17px;line-height:24px;color:#414750;letter-spacing:1.770px;">07</span> <span class="t" style="left:1900.40px;top:930.00px;font-size:17px;line-height:24px;color:#414750;letter-spacing:0.300px;">20:37:00</span></div><div class="row" style="top:977px;height:136px;"></div><div class="cb" style="left:395px;top:1034.5px"></div><span class="t" style="left:440.20px;top:1032.00px;font-size:17px;line-height:24px;color:#414750;letter-spacing:2.640px;">19</span><span class="t" style="left:480.57px;top:1032.00px;font-size:17px;line-height:24px;color:#414750;letter-spacing:0.662px;">EB1651829160678254</span><span class="t" style="left:681.33px;top:1032.00px;font-size:17px;line-height:24px;color:#414750;letter-spacing:0.891px;">18666669986</span><span class="t" style="left:880.60px;top:1032.00px;font-size:17px;line-height:24px;color:#414750;letter-spacing:-0.240px;">BTC/USDT</span><div class="badge" style="left:985.3px;top:1031.4px;width:75.4px;height:28.3px"></div><span class="t" style="left:992.93px;top:1035.00px;font-size:13.3px;line-height:20px;color:#fff;font-weight:700;letter-spacing:2.620px;">限价交易</span><span class="t" style="left:1078.73px;top:1032.00px;font-size:17px;line-height:24px;color:#414750;letter-spacing:0.655px;">36038.70000000</span><span class="t" style="left:1266.33px;top:1032.00px;font-size:17px;line-height:24px;color:#414750;letter-spacing:2.640px;">10</span><span class="t" style="left:1379.33px;top:1032.00px;font-size:17px;line-height:24px;color:#414750;letter-spacing:2.640px;">10</span><span class="t" style="left:1503.73px;top:1032.00px;font-size:17px;line-height:24px;color:#414750;letter-spacing:0.617px;">360387.0</span><span class="t" style="left:1657.73px;top:1032.00px;font-size:17px;line-height:24px;color:#414750;letter-spacing:0.617px;">360387.0</span><div class="dot" style="left:1811.8px;top:990.2px;background:#4cb36f"></div><div><span class="t" style="left:1821.20px;top:1011.00px;font-size:16px;line-height:22px;color:#414750;">全</span><span class="t" style="left:1812.37px;top:1033.00px;font-size:16px;line-height:22px;color:#414750;">部</span><span class="t" style="left:1812.80px;top:1057.00px;font-size:16px;line-height:22px;color:#414750;">成</span><span class="t" style="left:1812.80px;top:1081.00px;font-size:16px;line-height:22px;color:#414750;">交</span></div><div><span class="t" style="left:1864.33px;top:1008.00px;font-size:17px;line-height:24px;color:#5a66c2;">»</span> <span class="t" style="left:1861.40px;top:1033.00px;font-size:16px;line-height:22px;color:#5a66c2;">明</span><span class="t" style="left:1862.60px;top:1057.00px;font-size:16px;line-height:22px;color:#5a66c2;">细</span></div><div><span class="t" style="left:1900.40px;top:1010.00px;font-size:17px;line-height:24px;color:#414750;letter-spacing:0.934px;">2022-05-</span><span class="t" style="left:1900.40px;top:1032.00px;font-size:17px;line-height:24px;color:#414750;letter-spacing:1.770px;">06</span> <span class="t" style="left:1901.10px;top:1056.00px;font-size:17px;line-height:24px;color:#414750;">17:26:00</span></div><div style="position:absolute;left:0px;top:1000px;width:2029px;height:39.2px;background:linear-gradient(to bottom,rgba(0,0,0,0) 0%,rgba(0,0,0,.02) 45%,rgba(0,0,0,.075) 100%);-webkit-mask-image:linear-gradient(to right,rgba(0,0,0,.15) 0,rgba(0,0,0,.25) 46px,rgba(0,0,0,.6) 60px,#000 220px);mask-image:linear-gradient(to right,rgba(0,0,0,.15) 0,rgba(0,0,0,.25) 46px,rgba(0,0,0,.6) 60px,#000 220px)"></div><div style="position:absolute;left:0px;top:1039.2px;width:2048px;height:4.8px;background:linear-gradient(to right,#e6e7eb 0,#e2e3e6 46px,#d6d6d7 60px,#cecece 220px,#cecece 100%)"></div><div style="position:absolute;left:0px;top:0px;width:2048px;height:1046px;border-radius:0 0 11px 11px;box-shadow:0 0 0 30px #1b0f22;pointer-events:none"></div></div></body></html>
